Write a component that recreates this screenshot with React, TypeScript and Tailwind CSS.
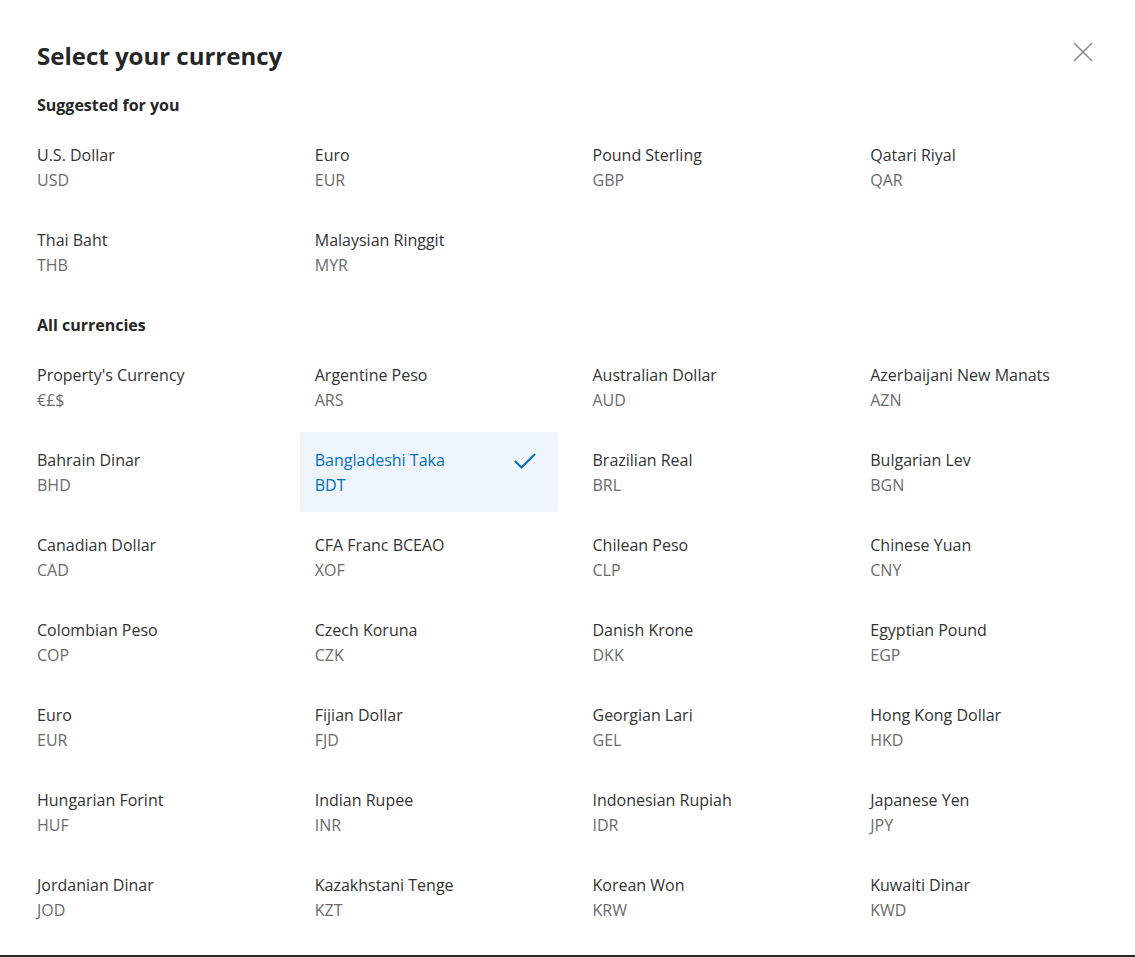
import React from "react";

type Cur = { name: string; code: string; selected?: boolean };

const suggested: Cur[] = [
  { name: "U.S. Dollar", code: "USD" },
  { name: "Euro", code: "EUR" },
  { name: "Pound Sterling", code: "GBP" },
  { name: "Qatari Riyal", code: "QAR" },
  { name: "Thai Baht", code: "THB" },
  { name: "Malaysian Ringgit", code: "MYR" },
];

const all: Cur[] = [
  { name: "Property's Currency", code: "€£$" },
  { name: "Argentine Peso", code: "ARS" },
  { name: "Australian Dollar", code: "AUD" },
  { name: "Azerbaijani New Manats", code: "AZN" },
  { name: "Bahrain Dinar", code: "BHD" },
  { name: "Bangladeshi Taka", code: "BDT", selected: true },
  { name: "Brazilian Real", code: "BRL" },
  { name: "Bulgarian Lev", code: "BGN" },
  { name: "Canadian Dollar", code: "CAD" },
  { name: "CFA Franc BCEAO", code: "XOF" },
  { name: "Chilean Peso", code: "CLP" },
  { name: "Chinese Yuan", code: "CNY" },
  { name: "Colombian Peso", code: "COP" },
  { name: "Czech Koruna", code: "CZK" },
  { name: "Danish Krone", code: "DKK" },
  { name: "Egyptian Pound", code: "EGP" },
  { name: "Euro", code: "EUR" },
  { name: "Fijian Dollar", code: "FJD" },
  { name: "Georgian Lari", code: "GEL" },
  { name: "Hong Kong Dollar", code: "HKD" },
  { name: "Hungarian Forint", code: "HUF" },
  { name: "Indian Rupee", code: "INR" },
  { name: "Indonesian Rupiah", code: "IDR" },
  { name: "Japanese Yen", code: "JPY" },
  { name: "Jordanian Dinar", code: "JOD" },
  { name: "Kazakhstani Tenge", code: "KZT" },
  { name: "Korean Won", code: "KRW" },
  { name: "Kuwaiti Dinar", code: "KWD" },
];

function Item({ c }: { c: Cur }) {
  if (c.selected) {
    return (
      <div className="flex items-start justify-between rounded-[2px] bg-[#eef5fa] px-[15px] pb-[15px] pt-4 text-[16px] leading-6 text-[#0071c2]">
        <div>
          <div>{c.name}</div>
          <div className="mt-px">{c.code}</div>
        </div>
        <svg width="24" height="24" viewBox="0 0 24 24" className="mr-[6px] mt-[1px]" fill="none">
          <path d="M2.5 12.5 L8.5 18.5 L21.5 5.5" stroke="#0071c2" strokeWidth="2" strokeLinecap="round" strokeLinejoin="round" />
        </svg>
      </div>
    );
  }
  return (
    <div className="px-[15px] pb-[15px] pt-4 text-[16px] leading-6">
      <div className="text-[#333333]">{c.name}</div>
      <div className="mt-px text-[#6b6b6b]">{c.code}</div>
    </div>
  );
}

export default function App() {
  return (
    <div
      className="h-[957px] w-[1135px] overflow-hidden bg-[#262626]"
      style={{ fontFamily: '"Segoe UI", "Open Sans", "Noto Sans", sans-serif' }}
    >
      <div className="relative h-[955px] overflow-hidden bg-white px-[22px] pt-10">
        <button className="absolute right-[42px] top-[42px] flex h-5 w-5 items-center justify-center">
          <svg width="20" height="20" viewBox="0 0 20 20" fill="none">
            <path d="M1 1 L19 19 M19 1 L1 19" stroke="#8a8a8a" strokeWidth="1.5" />
          </svg>
        </button>
        <h1 className="px-[15px] text-[24px] font-bold leading-8 text-[#262626]">Select your currency</h1>
        <h2 className="mt-[21px] px-[15px] text-[16px] font-bold leading-6 text-[#262626]">Suggested for you</h2>
        <div className="mt-[10px] grid grid-cols-4 gap-x-5 gap-y-[5px]">
          {suggested.map((c, i) => (
            <Item key={i} c={c} />
          ))}
        </div>
        <h2 className="mt-[21px] px-[15px] text-[16px] font-bold leading-6 text-[#262626]">All currencies</h2>
        <div className="mt-[10px] grid grid-cols-4 gap-x-5 gap-y-[5px]">
          {all.map((c, i) => (
            <Item key={i} c={c} />
          ))}
        </div>
      </div>
    </div>
  );
}
